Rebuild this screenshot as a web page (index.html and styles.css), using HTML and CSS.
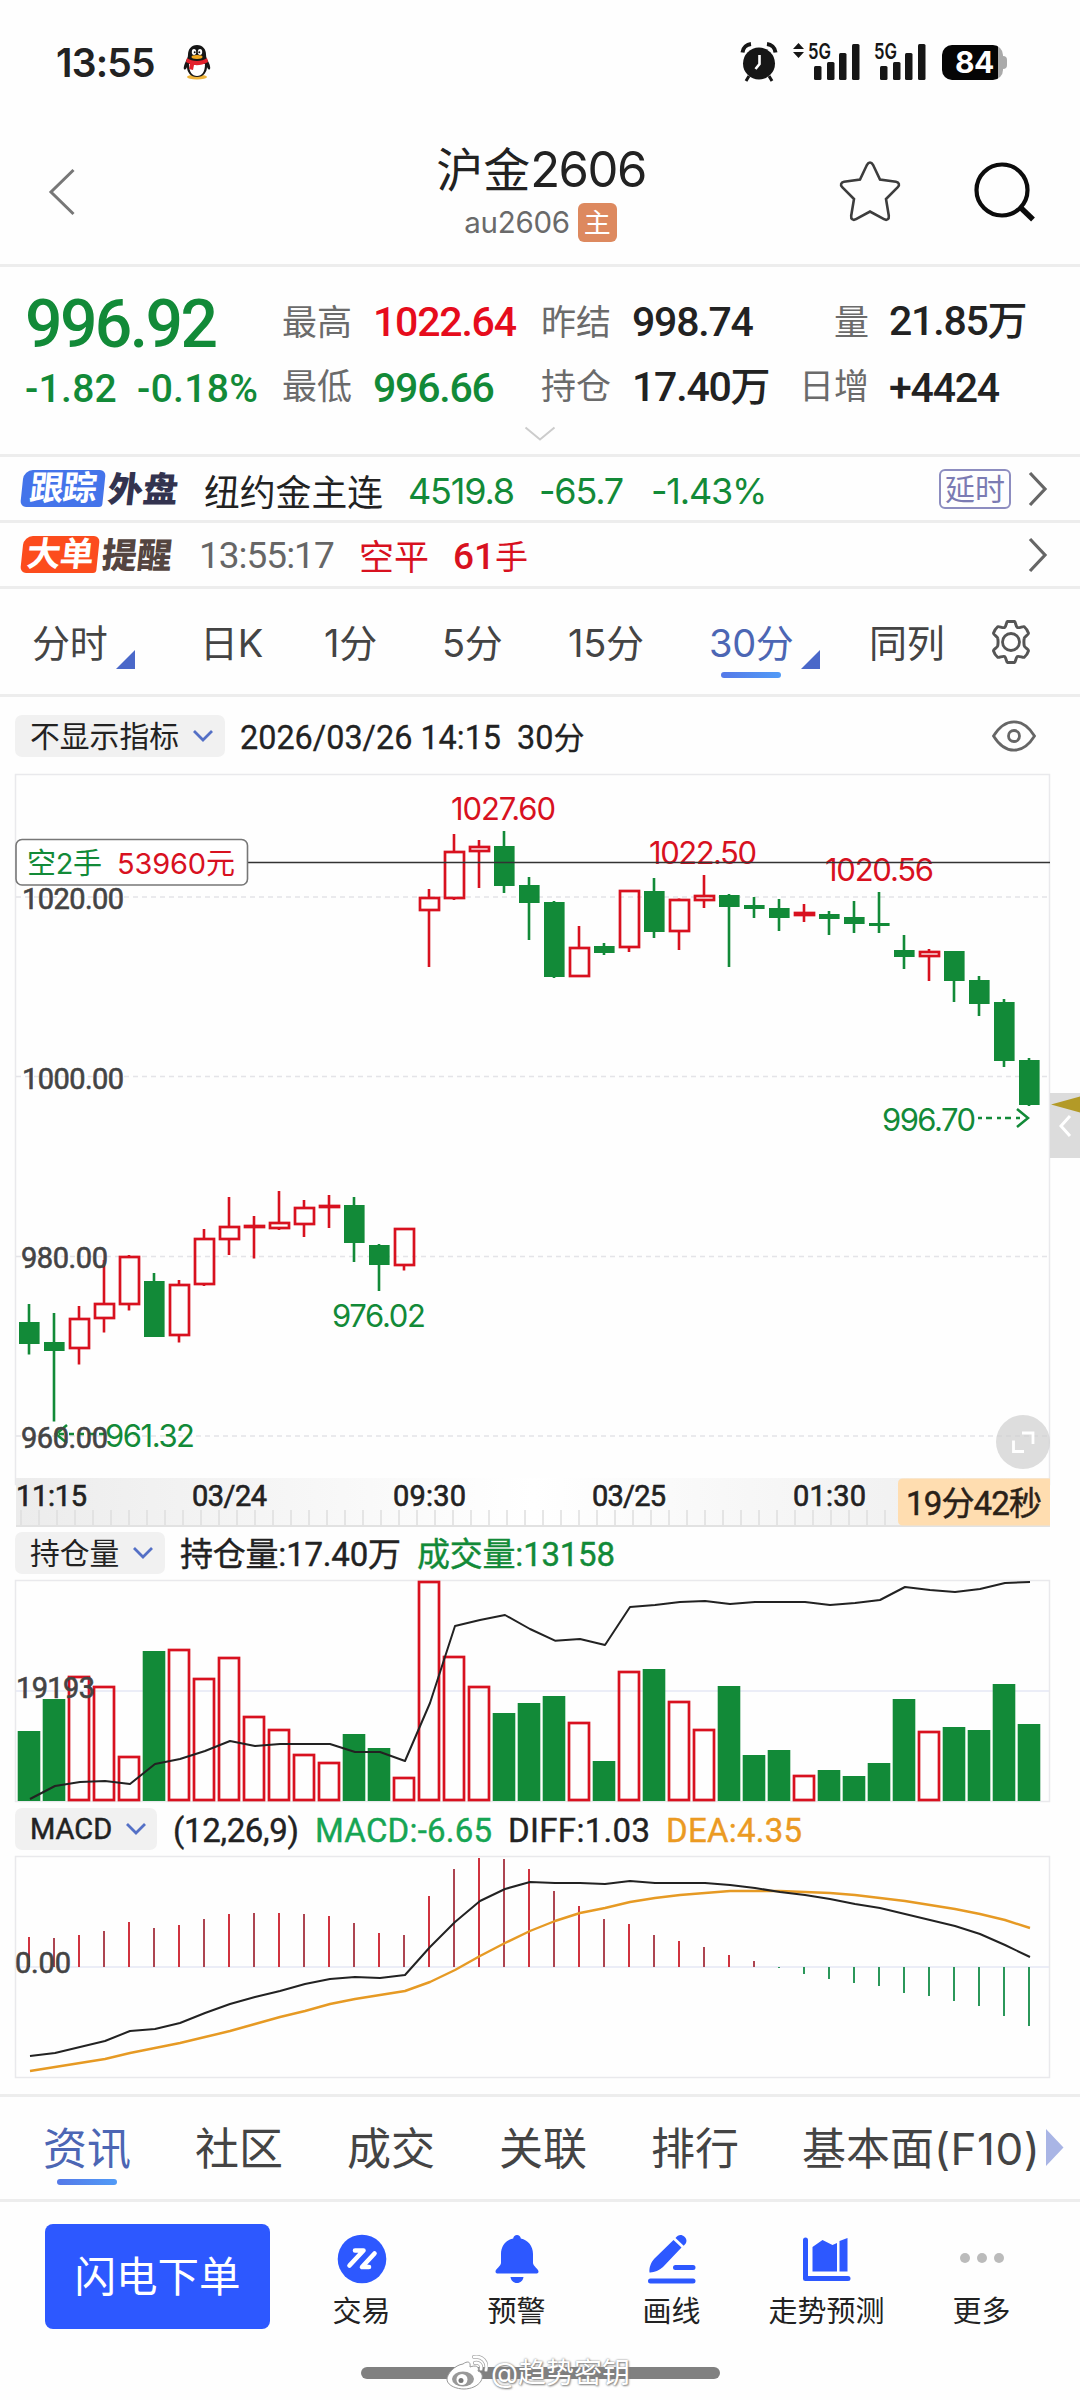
FILE: index.html
```html
<!DOCTYPE html>
<html lang="zh-CN">
<head>
<meta charset="utf-8">
<title>沪金2606</title>
<link rel="stylesheet" href="styles.css">
</head>
<body>
<div class="screen">
  <header class="status">
    <span class="clock">13:55</span>
    <svg class="qq" width="30" height="36" viewBox="0 0 30 36">
      <ellipse cx="15" cy="33" rx="10" ry="2.6" fill="#efb43a"/>
      <path d="M15 1c-6 0-9 4.500-9 9.500 0 3-1 4-2.500 7.500S1 25 2.500 25.500 5 23 5 23c0 5 3.500 10 10 10s10-5 10-10c0 0 1 3 2.500 2.500S28 21 26.500 18 24 13.500 24 10.500C24 5.500 21 1 15 1z" fill="#161616"/>
      <path d="M7 20c0 8 3 12 8 12s8-4 8-12z" fill="#fff"/>
      <path d="M5 14c5 4 15 4 20 0l1 4c-5 3-10 3.500-14 3l-1 5-4-1 1-5-4-2z" fill="#e3202b"/>
      <ellipse cx="12" cy="8" rx="2.200" ry="3" fill="#fff"/><ellipse cx="18" cy="8" rx="2.200" ry="3" fill="#fff"/>
      <circle cx="12.700" cy="8.200" r="1" fill="#111"/><circle cx="17.300" cy="8.200" r="1" fill="#111"/>
      <ellipse cx="15" cy="13" rx="5.500" ry="1.900" fill="#f2a91e"/>
    </svg>
    <svg class="alarm" width="38" height="40" viewBox="0 0 38 40">
      <circle cx="19" cy="21.500" r="16" fill="#161616"/>
      <path d="M2.500 10.500C3 5.500 7 2.500 11 2M35.500 10.500C35 5.500 31 2.500 27 2" fill="none" stroke="#161616" stroke-width="4"/>
      <path d="M9 34l-3 5M29 34l3 5" stroke="#161616" stroke-width="3"/>
      <path d="M19.500 13v9l-4 5" fill="none" stroke="#fff" stroke-width="2.600"/>
    </svg>
    <svg class="signal" width="134" height="44" viewBox="0 -4 134 44">
      <path d="M0 7l5.500-6 5.500 6zM0 10l5.500 6 5.500-6z" fill="#161616"/>
      <g class="net"><text x="15" y="17" textLength="23" lengthAdjust="spacingAndGlyphs">5G</text><text x="81" y="17" textLength="23" lengthAdjust="spacingAndGlyphs">5G</text></g>
      <g fill="#161616">
        <rect x="21" y="24" width="7.500" height="14" rx="1.500"/><rect x="34" y="20" width="7.500" height="18" rx="1.500"/><rect x="46" y="11" width="7.500" height="27" rx="1.500"/><rect x="59" y="2" width="7.500" height="36" rx="1.500"/>
        <rect x="87" y="24" width="7.500" height="14" rx="1.500"/><rect x="100" y="20" width="7.500" height="18" rx="1.500"/><rect x="112" y="11" width="7.500" height="27" rx="1.500"/><rect x="125" y="2" width="7.500" height="36" rx="1.500"/>
      </g>
    </svg>
    <div class="battery">84</div>
  </header>

  <div class="titlebar">
    <svg class="back" width="28" height="50" viewBox="0 0 28 50"><path d="M25.500 3L3 25l22.500 22" fill="none" stroke="#777" stroke-width="3"/></svg>
    <div class="title">
      <h1>沪金<span>2606</span></h1>
      <div class="code">au2606<b>主</b></div>
    </div>
    <svg class="star" width="62" height="64" viewBox="0 0 62 64"><path d="M31 2.500c1.500 0 2.300 1 3 2.300l7 14.700 16 2.300c3 .500 4 3.200 1.800 5.400L47 39l2.800 16.800c.400 3.200-1.800 5-4.800 3.400L31 51.500l-14 7.700c-3 1.600-5.200-.200-4.800-3.400L15 39 3.200 27.200C1 25 2 22.300 5 21.800l16-2.300 7-14.700c.7-1.300 1.500-2.300 3-2.300z" fill="none" stroke="#3d3d3d" stroke-width="2.600"/></svg>
    <svg class="search" width="64" height="64" viewBox="0 0 64 64"><circle cx="29" cy="29" r="25.500" fill="none" stroke="#0c0c0c" stroke-width="4.200"/><path d="M47 46l13 12.500" stroke="#0c0c0c" stroke-width="5.500"/></svg>
  </div>

  <section class="quote">
    <div class="price">996.92</div>
    <div class="k">最高</div><div class="v top red">1022.64</div>
    <div class="k">昨结</div><div class="v top">998.74</div>
    <div class="k end">量</div><div class="v top">21.85<i>万</i></div>
    <div class="change"><span>-1.82</span><span>-0.18%</span></div>
    <div class="k">最低</div><div class="v green">996.66</div>
    <div class="k">持仓</div><div class="v">17.40<i>万</i></div>
    <div class="k end">日增</div><div class="v">+4424</div>
    <svg class="more-quote" width="32" height="16" viewBox="0 0 32 16"><path d="M1.500 1.500L16 13.500 30.500 1.500" fill="none" stroke="#ccc" stroke-width="2"/></svg>
  </section>

  <section class="notice">
    <div class="tag blue"><span>跟踪</span><em>外盘</em></div>
    <div class="name">纽约金主连</div>
    <div class="num n1">4519.8</div><div class="num n2">-65.7</div><div class="num n3">-1.43%</div>
    <div class="delay">延时</div>
    <svg class="go" width="22" height="38" viewBox="0 0 22 38"><path d="M3 3l15 16L3 35" fill="none" stroke="#666" stroke-width="3.200"/></svg>
  </section>
  <section class="notice">
    <div class="tag orange"><span>大单</span><em>提醒</em></div>
    <div class="time">13:55:17</div>
    <div class="side">空平</div><div class="hands">61<i>手</i></div>
    <svg class="go" width="22" height="38" viewBox="0 0 22 38"><path d="M3 3l15 16L3 35" fill="none" stroke="#666" stroke-width="3.200"/></svg>
  </section>

  <nav class="periods">
    <span class="p1">分时</span><i class="corner c1"></i>
    <span class="p2">日K</span><span class="p3">1分</span><span class="p4">5分</span><span class="p5">15分</span>
    <span class="p6 on">30分</span><i class="corner c2"></i>
    <span class="p7">同列</span>
    <svg class="gear" width="46" height="46" viewBox="0 0 46 46"><path d="M19.500 2.500h7c.8 0 .9 5 2.500 6 1.600 1 5.500-1.600 6.500-.8 1.500 1.300 3.500 4.800 4 6.500.4 1.300-3.800 3.300-4 5-.2 1.200-.2 6.400 0 7.600.2 1.700 4.400 3.700 4 5-.5 1.700-2.500 5.200-4 6.500-1 .8-4.900-1.800-6.500-.8s-1.700 6-2.500 6h-7c-.8 0-.9-5-2.500-6s-5.500 1.600-6.500.8c-1.500-1.300-3.500-4.800-4-6.500-.4-1.300 3.800-3.300 4-5 .2-1.200.2-6.400 0-7.600-.2-1.700-4.400-3.700-4-5 .5-1.700 2.500-5.200 4-6.500 1-.8 4.900 1.800 6.500.8s1.700-6 2.500-6z" transform="translate(-1.400 0) scale(1.060 1)" fill="none" stroke="#555" stroke-width="2.800" stroke-linejoin="round"/><circle cx="23" cy="23" r="8.500" fill="none" stroke="#555" stroke-width="2.800"/></svg>
  </nav>

  <div class="indicator">
    <div class="pill">不显示指标<svg width="22" height="14" viewBox="0 0 22 14"><path d="M2 2l9 9 9-9" fill="none" stroke="#5470c6" stroke-width="2.800"/></svg></div>
    <div class="date">2026/03/26 14:15&nbsp; 30<i>分</i></div>
    <svg class="eye" width="44" height="32" viewBox="0 0 44 32"><path d="M1.500 16C8 5.500 14 1.800 22 1.800S36 5.500 42.500 16C36 26.500 30 30.200 22 30.200S8 26.500 1.500 16z" fill="none" stroke="#666" stroke-width="2.800"/><circle cx="22" cy="16" r="5.500" fill="none" stroke="#666" stroke-width="2.800"/></svg>
  </div>

  <svg class="chart" id="kline" width="1080" height="706" viewBox="0 773 1080 706">
    <rect class="frame" x="15.500" y="774.500" width="1034" height="710"/>
    <path class="dash" d="M16 897h1033M16 1076.500h1033M16 1256.500h1033M16 1436h1033"/>
    <g id="candles"></g>
    <g class="mark up">
      <text x="451" y="820" textLength="105">1027.60</text>
      <text x="649" y="864" textLength="108">1022.50</text>
      <text x="825" y="881" textLength="109">1020.56</text>
    </g>
    <g class="mark down">
      <text x="882" y="1131" textLength="94">996.70</text>
      <text x="332" y="1327" textLength="94">976.02</text>
      <text x="105" y="1447" textLength="90">961.32</text>
    </g>
    <path d="M978 1118h42" class="arrow" stroke-dasharray="4 4 6 5"/><path d="M1017 1109l11 9-11 9" class="arrow"/>
    <path d="M104 1434H58" class="arrow" stroke-dasharray="5 5"/><path d="M67 1425l-11 9 11 9" class="arrow"/>
    <path d="M16 862.500h1034" stroke="#333" stroke-width="1.300"/>
    <rect x="16" y="839.500" width="231.500" height="45.500" rx="6" fill="#fff" stroke="#777" stroke-width="1.600"/>
    <text class="pos down" x="27" y="874" textLength="75">空2手</text>
    <text class="pos up" x="117" y="874" textLength="118">53960元</text>
    <g class="scale">
      <text x="22" y="909" textLength="102">1020.00</text><text x="22" y="1089" textLength="102">1000.00</text>
      <text x="21" y="1268" textLength="87">980.00</text><text x="21" y="1448" textLength="87">960.00</text>
    </g>
    <rect x="1050" y="1093" width="30" height="65" fill="#dcdcdc"/>
    <path d="M1051 1104.500l29-8v16z" fill="#b39a27"/>
    <path d="M1070 1116l-9 10 9 10" fill="none" stroke="#fff" stroke-width="3"/>
    <circle cx="1023" cy="1442" r="27" fill="#cfcfcf" fill-opacity=".7"/>
    <path d="M1022 1433h11v11M1024 1451.500h-10.500v-11" fill="none" stroke="#fff" stroke-width="2.800"/>
  </svg>

  <div class="timeline">
    <svg width="1034" height="49" viewBox="16 1478 1034 49">
      <g id="ticks"></g>
      <path d="M16 1526h1034" stroke="#e2e2e2" stroke-width="2"/>
      <g class="dates">
        <text x="16" y="1506" textLength="71">11:15</text><text x="192" y="1506" textLength="75">03/24</text><text x="393" y="1506" textLength="73">09:30</text><text x="592" y="1506" textLength="74">03/25</text><text x="793" y="1506" textLength="73">01:30</text>
      </g>
      <path d="M1050 1478.500H903q-5 0-5 5v37q0 5 5 5h147z" fill="#ffddb0"/>
      <text class="left-time" x="906" y="1514.500" textLength="136">19分42秒</text>
    </svg>
  </div>

  <div class="legend vol">
    <div class="pill">持仓量<svg width="22" height="14" viewBox="0 0 22 14"><path d="M2 2l9 9 9-9" fill="none" stroke="#5470c6" stroke-width="2.800"/></svg></div>
    <svg class="vals" width="860" height="44" viewBox="165 1532 860 44"><text x="180" y="1566" textLength="221">持仓量:17.40万</text><text class="down" x="417" y="1566" textLength="198">成交量:13158</text></svg>
  </div>
  <svg class="chart" width="1080" height="223" viewBox="0 1580 1080 223">
    <path d="M16 1691h1033" stroke="#ebedf7" stroke-width="2"/>
    <rect class="frame" x="15.500" y="1580.500" width="1034" height="221"/>
    <g id="volume"></g>
    <polyline id="open-interest" class="line"/>
    <text class="scale" x="16" y="1698" textLength="79">19193</text>
  </svg>

  <div class="legend macd">
    <div class="pill">MACD<svg width="22" height="14" viewBox="0 0 22 14"><path d="M2 2l9 9 9-9" fill="none" stroke="#5470c6" stroke-width="2.800"/></svg></div>
    <svg class="vals" width="860" height="44" viewBox="157 1808 860 44"><text x="173" y="1842" textLength="126">(12,26,9)</text><text class="lime" x="315" y="1842" textLength="177">MACD:-6.65</text><text x="508" y="1842" textLength="142">DIFF:1.03</text><text class="gold" x="666" y="1842" textLength="136">DEA:4.35</text></svg>
  </div>
  <svg class="chart" width="1080" height="238" viewBox="0 1856 1080 238">
    <path d="M16 1967h1033" stroke="#ebedf7" stroke-width="2"/>
    <rect class="frame" x="15.500" y="1856.500" width="1034" height="221"/>
    <g id="bars"></g>
    <polyline id="dea" class="line dea"/>
    <polyline id="diff" class="line"/>
    <text class="scale" x="15" y="1973" textLength="56">0.00</text>
  </svg>

  <nav class="news">
    <span class="t1 on">资讯</span><span class="t2">社区</span><span class="t3">成交</span><span class="t4">关联</span><span class="t5">排行</span><span class="t6">基本面<b>(F10)</b></span>
    <svg width="18" height="38" viewBox="0 0 18 38"><path d="M0 0l17.500 18.500L0 37z" fill="#a9b5e5"/></svg>
  </nav>

  <footer class="actions">
    <button class="order">闪电下单</button>
    <div class="act"><svg width="50" height="50" viewBox="0 0 50 50"><circle cx="25" cy="25" r="24.300" fill="#2d58ff"/><path d="M18 16.500h8.500L12.500 31.500M37.500 19.500L25 33h7" fill="none" stroke="#fff" stroke-width="4.600" stroke-linecap="round" stroke-linejoin="round"/></svg>交易</div>
    <div class="act"><svg width="50" height="50" viewBox="0 0 50 50"><path d="M25 1c2 0 3.500 1.500 3.800 3.500C36 6 41 12 41 20v9c0 3 5.500 6 5.500 8.500 0 1.500-1 2-2.500 2H6c-1.500 0-2.500-.500-2.500-2C3.500 35 9 32 9 29v-9C9 12 14 6 21.200 4.500 21.500 2.500 23 1 25 1zM18.500 43h13c-.500 3.500-3 6-6.500 6s-6-2.500-6.500-6z" fill="#2d58ff"/></svg>预警</div>
    <div class="act"><svg width="50" height="50" viewBox="0 0 50 50"><path d="M26.500 6l8 7.500L16 33c-4 3.500-9 5.800-13.500 5.500C1.800 34 4 28 7.500 24.500zM28.500 4c2.500-3.500 6-4 9-1.300 2.700 2.500 2.800 6-.8 9z" fill="#2d58ff"/><path d="M28.500 33.500H46M3.500 47H46" stroke="#2d58ff" stroke-width="5" stroke-linecap="round"/></svg>画线</div>
    <div class="act wide"><svg width="50" height="50" viewBox="0 0 50 50"><path d="M3.500 6v38.500H46" fill="none" stroke="#2d58ff" stroke-width="5" stroke-linecap="round" stroke-linejoin="round"/><path d="M10.500 13l10-7 10 5 4.500-2v28.500H10.500zM37.500 7l8-3v33.500h-8z" fill="#2d58ff"/></svg>走势预测</div>
    <div class="act"><svg width="50" height="50" viewBox="0 0 50 50"><circle cx="8" cy="24" r="5" fill="#bbb"/><circle cx="25" cy="24" r="5" fill="#bbb"/><circle cx="42" cy="24" r="5" fill="#bbb"/></svg>更多</div>
  </footer>
  <div class="home">
    <div class="credit">
      <svg width="42" height="36" viewBox="0 0 42 36"><path d="M17 9c4-3 8-3 7 3 5-2 10-1 8 4 5 2 5 6 3 10-3 5-10 8-17 8S2 31 1 25c-.500-6 8-15 16-16z" fill="#fff" stroke="#999" stroke-width="1"/><ellipse cx="17" cy="24" rx="11" ry="7.500" fill="#999"/><circle cx="16" cy="24.500" r="5.500" fill="#fff"/><circle cx="15" cy="25.500" r="2.500" fill="#777"/><path d="M29 8c4-1 7 2 6 6M28 2c8-1.500 14 5 12 13" fill="none" stroke="#aaa" stroke-width="4" stroke-linecap="round"/><path d="M29 8c4-1 7 2 6 6M28 2c8-1.500 14 5 12 13" fill="none" stroke="#fff" stroke-width="2.400" stroke-linecap="round"/></svg>
      <span>@趋势密钥</span>
    </div>
  </div>
</div>
<script src="chart.js"></script>
</body>
</html>
```
FILE: styles.css
```css
* { box-sizing: border-box; }
body { margin: 0; background: #fdfdfe; color: #222; font-family: Inter, "Noto Sans CJK SC", sans-serif; }
i, em { font-style: normal; }
svg { display: block; flex: none; }
.screen { width: 1080px; height: 2400px; overflow: hidden; background: #fefefe; display: flex; flex-direction: column; }
.screen > * { flex: none; }
.red { color: #e60c1c; }
.green { color: #128a38; }

.status { height: 124px; display: flex; align-items: center; padding-left: 56px; }
.status > * { flex: none; }
.clock { width: 100px; font-size: 39px; font-weight: 600; line-height: 1; letter-spacing: -.8px; }
.qq { margin-left: 26px; }
.alarm { margin-left: 528px; }
.signal { margin: -4px 0 0 15px; overflow: visible; }
.net { font: 600 22px Inter, sans-serif; fill: #161616; }
.battery { position: relative; margin-left: 15px; width: 61px; height: 35px; border-radius: 10px; background: linear-gradient(90deg, #050505 56px, #aaa 56px); color: #fff; font-size: 30px; font-weight: 700; line-height: 35px; padding-left: 13px; letter-spacing: -.5px; }
.battery::after { content: ""; position: absolute; left: 61px; top: 11px; width: 4px; height: 13px; border-radius: 0 4px 4px 0; background: #aaa; }

.titlebar { height: 143px; border-bottom: 3px solid #ededed; display: flex; align-items: flex-start; padding-left: 48px; }
.back { margin-top: 43px; }
.title { width: 300px; margin-left: 315px; display: flex; flex-direction: column; align-items: center; }
h1 { margin: 16px 0 0; font-size: 47px; line-height: 60px; font-weight: 400; white-space: nowrap; }
h1 span { font-size: 49px; letter-spacing: -1.500px; }
.code { display: flex; align-items: center; height: 40px; margin: 2px 1px 0 0; font-size: 29.500px; color: #6a6a6a; letter-spacing: -.3px; }
.code b { margin-left: 8px; width: 39px; height: 39px; border-radius: 6px; background: #dd895f; color: #fff; font: 400 27px/38px "Noto Sans CJK SC", sans-serif; text-align: center; }
.star { margin: 36px 0 0 148px; }
.search { margin: 37px 0 0 72px; }

.quote { position: relative; height: 190px; border-bottom: 3px solid #ededed; padding: 25px 0 0 25px; display: grid; grid-template-columns: 257px 91px 168px 91px 165px 92px 190px; grid-template-rows: 63px 65px; align-items: center; font-family: Roboto, "Noto Sans CJK SC", sans-serif; }
.price { font-size: 66px; font-weight: 500; letter-spacing: -2.600px; color: #128a38; line-height: 63px; padding-top: 2px; }
.change { font-size: 39px; font-weight: 500; color: #128a38; display: flex; gap: 20px; letter-spacing: .3px; padding-top: 2px; }
.k { font-size: 35px; line-height: 50px; color: #6b6b6b; }
.k.end { text-align: right; padding-right: 20px; }
.v { font-size: 41px; line-height: 50px; font-weight: 500; letter-spacing: -1.200px; white-space: nowrap; }
.v.top { padding-bottom: 4px; }
.v i { font-size: 40px; letter-spacing: 0; }
.more-quote { position: absolute; left: 524px; top: 159px; }

.notice { height: 66px; border-bottom: 3px solid #ededed; display: flex; align-items: center; padding-left: 22px; white-space: nowrap; }
.tag { width: 182px; display: flex; align-items: center; font-size: 35px; font-weight: 900; line-height: 36px; }
.tag span { width: 82px; height: 37px; border-radius: 9px 6px 3px 6px; transform: skewX(-6deg); color: #fff; text-align: center; letter-spacing: -1px; font-size: 34px; font-weight: 700; }
.tag em { display: inline-block; transform: skewX(-6deg); margin-left: 4px; color: #33334f; font-weight: 800; }
.tag.blue span { background: #4474ea; }
.tag.orange span { width: 76px; background: #fc4c1d; }
.tag.orange em { color: #544540; }
.tag.orange { width: 177px; }
.name { width: 204px; font-size: 35.800px; padding-top: 2px; }
.num { font-size: 36px; color: #128a38; letter-spacing: -1.200px; padding-top: 4px; }
.n1 { width: 131px; } .n2 { width: 112px; } .n3 { width: 288px; }
.delay { width: 72px; height: 40px; border: 2.500px solid #8d8dc0; border-radius: 6px; color: #7b7bb3; font-size: 30px; line-height: 37px; text-align: center; }
.go { margin-left: 16px; }
.time { width: 160px; font: 400 37px Roboto, sans-serif; letter-spacing: -1px; color: #666; padding-top: 2px; }
.side { width: 94px; font-size: 35px; color: #d8111f; }
.hands { width: 556px; font: 500 37px Roboto, "Noto Sans CJK SC", sans-serif; color: #d8111f; }
.hands i { font-size: 33px; font-weight: 400; }
.notice:has(.time) .go { margin-left: 18px; }

.periods { height: 108px; border-bottom: 3px solid #ededed; display: flex; align-items: center; font-size: 38px; color: #444; padding-left: 32px; white-space: nowrap; }
.periods span { flex: none; line-height: 50px; letter-spacing: -.3px; margin-top: 3px; }
.periods .p1 { width: 84px; } .periods .p2 { width: 124px; margin-left: 65px; } .p3 { width: 118px; } .p4 { width: 126px; } .p5 { width: 141px; } .p6 { width: 92px; } .periods .p7 { width: 119px; margin-left: 49px; }
.corner { width: 19px; height: 19px; margin-top: 36px; background: #4a68c9; clip-path: polygon(100% 0, 100% 100%, 0 100%); }
.on { position: relative; color: #4c66b4; }
.on::after { content: ""; position: absolute; left: 12px; bottom: -10px; width: 60px; height: 6px; border-radius: 3px; background: linear-gradient(90deg, #5579e8, #519bf7); }

.indicator { height: 76px; padding: 1px 0 0 15px; display: flex; align-items: center; }
.pill { height: 42px; flex: none; border-radius: 7px; background: #f1f1f1; display: flex; align-items: center; padding-left: 15px; font-size: 29.800px; line-height: 44px; color: #222; }
.pill svg { margin: 0 0 0 13px; }
.indicator .pill { width: 210px; }
.date { flex: none; width: 767px; padding-left: 15px; font: 400 32.400px Roboto, "Noto Sans CJK SC", sans-serif; white-space: nowrap; -webkit-text-stroke: .3px #222; }
.date i { font-size: 31px; }

.chart { overflow: visible; }
.frame { fill: none; stroke: #e9e9ec; stroke-width: 1.500; }
.dash { fill: none; stroke: #e4e4e8; stroke-width: 1.300; stroke-dasharray: 5 4; }
.mark { font: 400 31px Inter, sans-serif; }
.pos { font: 400 29px Inter, "Noto Sans CJK SC", sans-serif; }
.up { fill: #d8111f; }
.down { fill: #128a38; }
.vals .down { fill: #128a38; stroke: #128a38; }
.vals .lime { fill: #16a553; stroke: #16a553; }
.vals .gold { fill: #eb9a22; stroke: #eb9a22; }
.arrow { fill: none; stroke: #128a38; stroke-width: 2.500; }
.scale { font: 400 29px Roboto, sans-serif; fill: #444; stroke: #444; stroke-width: .6; }
.line { fill: none; stroke: #222; stroke-width: 2; stroke-linejoin: round; }
.dea { stroke: #e69a24; stroke-width: 2.400; }
.timeline { height: 49px; margin: -1px 30px 0 16px; position: relative; background: linear-gradient(90deg, #ececec 0%, #fff 50%, #ececec 100%); }
.dates { font: 400 29px Roboto, sans-serif; fill: #222; stroke: #222; stroke-width: .6; }
.left-time { font: 400 33px Roboto, "Noto Sans CJK SC", sans-serif; fill: #2a2118; stroke: #2a2118; stroke-width: .5; }

.legend { display: flex; padding-left: 15px; }
.vol { height: 53px; padding-top: 5px; }
.macd { height: 53px; padding-top: 5px; }
.vol .pill { width: 150px; }
.macd .pill { width: 142px; font: 400 29px/44px Roboto, sans-serif; -webkit-text-stroke: .5px #222; }
.vals { font: 400 33px Roboto, "Noto Sans CJK SC", sans-serif; fill: #222; stroke: #222; stroke-width: .4; }

.news { height: 108px; border-top: 3px solid #ededed; border-bottom: 3px solid #ededed; display: flex; align-items: center; font-size: 44px; color: #444; padding-left: 43px; white-space: nowrap; }
.news span { line-height: 60px; width: 152px; flex: none; margin-top: 2px; }
.news span.t6 { width: 244px; margin-left: -1px; }
.news b { font-weight: 400; letter-spacing: .5px; }
.news .on { color: #4c66b4; }
.news .on::after { left: 14px; bottom: -6px; }

.actions { height: 148px; padding: 22px 0 0 45px; display: flex; }
.order { width: 225px; height: 105px; border: 0; border-radius: 8px; padding: 0 0 5px; background: #2d58ff; color: #fff; font: 400 41.500px "Noto Sans CJK SC", sans-serif; }
.act { width: 155px; display: flex; flex-direction: column; align-items: center; padding-top: 10px; font-size: 29px; line-height: 40px; color: #222; }
.act svg { margin-bottom: 8px; }
.order + .act { margin-left: 14px; }
.home { width: 359px; height: 12px; border-radius: 6px; background: #808080; margin: 17px 0 0 361px; position: relative; }
.credit { position: absolute; left: 85px; top: -13px; height: 38px; display: flex; align-items: center; gap: 3px; color: #fff; font-size: 28px; line-height: 38px; white-space: nowrap; text-shadow: 0 0 2px #777, 1px 1px 2px #888; }
```
FILE: chart.js
```js
const NS = 'http://www.w3.org/2000/svg';
const RED = '#d8111f', GREEN = '#128a38';
const center = i => 29 + i * 25;
function add(id, tag, attrs) {
  const el = document.createElementNS(NS, tag);
  for (const k in attrs) el.setAttribute(k, attrs[k]);
  document.getElementById(id).appendChild(el);
}

// [rising, high, body top, body bottom, low]
const candles = [
  [0,1304,1322,1343.5,1354.5],[0,1313,1342,1351,1421.5],[1,1306,1318,1349,1364.5],[1,1260,1303,1319,1332.5],
  [1,1255,1256,1305,1310.5],[0,1273,1281,1337,1337],[1,1280,1284,1336,1342.5],[1,1229,1238,1285,1286],
  [1,1197,1226,1240,1255],[1,1216,1225,1228,1258.5],[1,1191,1221.5,1228.5,1230],[1,1200,1207,1225,1237],
  [1,1195,1205,1208,1228],[0,1197,1205,1243,1262],[0,1244,1245,1265,1291],[1,1228,1228,1266,1270.5],
  [1,889,897,911,967],[1,834,850.5,899,900],[1,840,845.5,852,888],[0,831,846,886,893],
  [0,877,885,903,940],[0,901,902,977,978],[1,926,947,977,977],[0,943,946,953,955],
  [1,890,890,948,952],[0,878,891,932,938],[1,898.5,898.5,932,950],[1,875,894.5,901,908],
  [0,894,895,907,967],[0,897,905,909,918],[0,899,908,918,931],[1,904,912,916,922],
  [0,911,914,919,935],[0,901,917,924,933],[0,892,923,926,933],[0,935,950,957,969],
  [1,949,950.5,957,981],[0,951,951,981,1002],[0,976,980,1004,1016],[0,999,1002,1061,1067],[0,1058,1060,1105,1106]
];
candles.forEach(([up, high, top, bottom, low], i) => {
  const x = center(i), color = up ? RED : GREEN;
  const t = Math.round(top), b = Math.round(bottom);
  add('candles', 'path', { d: `M${x} ${high}V${t}M${x} ${b}V${low}`, stroke: color, 'stroke-width': 2.6 });
  if (up) add('candles', 'rect', { x: x - 9, y: t + 1, width: 19, height: Math.max(b - t - 2, 1), fill: 'none', stroke: color, 'stroke-width': 2.7 });
  else add('candles', 'rect', { x: x - 10, y: t, width: 20.6, height: b - t, fill: color });
});

for (let x = 21; x < 1050; x += 18) add('ticks', 'path', { d: `M${x} 1510v16`, stroke: '#dedede', 'stroke-width': 1.5 });

const volume = [1731,1699,1676,1686,1756,1651,1649,1678,1657,1716,1729,1754,1762,1734,1748,1777,1581,1656,1686,1713,1703,
  1695.7,1722,1760.7,1671,1668.7,1701,1729,1685.7,1755,1750,1775,1769.7,1776,1762.7,1699,1731,1727,1730,1684,1724];
volume.forEach((value, i) => {
  const x = center(i), top = Math.round(value);
  if (candles[i][0]) add('volume', 'rect', { x: x - 10, y: top + 1, width: 20, height: 1800 - top - 1, fill: 'none', stroke: RED, 'stroke-width': 2.7 });
  else add('volume', 'rect', { x: x - 11.3, y: top, width: 22.6, height: 1801 - top, fill: GREEN });
});

const plot = (id, ys) => document.getElementById(id).setAttribute('points', ys.map((y, i) => `${center(i) + 1},${y}`).join(' '));
plot('open-interest', [1799,1786,1782,1781,1784,1764,1759,1751,1741,1746,1744,1744,1744,1752,1752,1761,1703,1626,1620,1615,1629,
  1640.7,1639,1645,1607,1605,1602,1601,1604,1602,1602,1602,1605,1603,1600,1587,1590,1592,1589,1583,1582]);

const macd = [1937,1938,1935,1931,1922,1928,1925,1919,1914,1913,1913,1914,1916,1923,1933,1935,1896,1869,1858,1859,1869,
  1891,1906,1919,1924,1935,1941,1947,1955,1961,1968,1974,1979,1983,1986,1993,1996,2001,2006,2016,2026];
macd.forEach((y, i) => add('bars', 'path', { d: `M${center(i)} 1967V${y}`, stroke: y < 1967 ? (i % 2 ? '#ad4551' : '#cf333f') : '#2b975a', 'stroke-width': 2 }));
plot('diff', [2056,2053,2047,2041,2031,2029,2023,2013,2004,1997,1991,1984,1979,1977,1978,1975,1947,1922,1901,1889,1882,
  1883,1883,1884,1881,1883,1883,1883,1885,1888,1892,1895,1899,1904,1908,1914,1920,1926,1934,1945,1957]);
plot('dea', [2071,2067,2063,2059,2053,2048,2043,2037,2031,2024,2017,2011,2004,1999,1995,1991,1982,1970,1956,1943,1931,
  1921,1913,1908,1902,1898,1895,1893,1891,1891,1891,1892,1893,1895,1898,1901,1905,1909,1914,1920,1928]);
```
